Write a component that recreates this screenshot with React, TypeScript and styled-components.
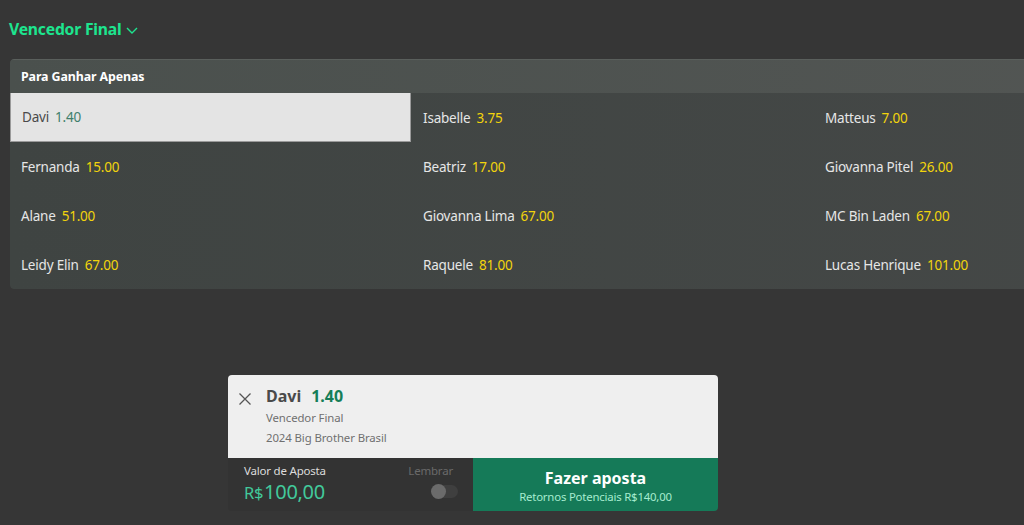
import styled, { createGlobalStyle } from 'styled-components';

const runners = [
    { name: 'Davi', odds: '1.40' },
    { name: 'Isabelle', odds: '3.75' },
    { name: 'Matteus', odds: '7.00' },
    { name: 'Fernanda', odds: '15.00' },
    { name: 'Beatriz', odds: '17.00' },
    { name: 'Giovanna Pitel', odds: '26.00' },
    { name: 'Alane', odds: '51.00' },
    { name: 'Giovanna Lima', odds: '67.00' },
    { name: 'MC Bin Laden', odds: '67.00' },
    { name: 'Leidy Elin', odds: '67.00' },
    { name: 'Raquele', odds: '81.00' },
    { name: 'Lucas Henrique', odds: '101.00' },
];

const GlobalStyle = createGlobalStyle`
    html, body {
        margin: 0;
        padding: 0;
        background: #363636;
        overflow: hidden;
    }
    body {
        font-family: 'Noto Sans', 'Open Sans', sans-serif;
    }
`;

const App = () => {
    return (
        <>
            <GlobalStyle />
            <Page>
                <Title>
                    Vencedor Final
                    <svg width="14" height="14" viewBox="0 0 14 14">
                        <path
                            d="M2 5 L7 10 L12 5"
                            fill="none"
                            stroke="#1de58f"
                            strokeWidth="1.4"
                        />
                    </svg>
                </Title>
                <MarketViewport>
                    <Market>
                        <MarketHeader>Para Ganhar Apenas</MarketHeader>
                        <Grid>
                            {runners.map((r, i) => (
                                <Cell key={i} $selected={i === 0}>
                                    <Name $selected={i === 0}>{r.name}</Name>
                                    <Odds $selected={i === 0}>{r.odds}</Odds>
                                </Cell>
                            ))}
                        </Grid>
                    </Market>
                </MarketViewport>
                <BetSlip>
                    <SlipTop>
                        <CloseButton>
                            <svg width="14" height="14" viewBox="0 0 14 14">
                                <path
                                    d="M1.5 1.5 L12.5 12.5 M12.5 1.5 L1.5 12.5"
                                    stroke="#555"
                                    strokeWidth="1.3"
                                />
                            </svg>
                        </CloseButton>
                        <SlipInfo>
                            <SelectionLine>
                                <SelectionName>Davi</SelectionName>
                                <SelectionOdds>1.40</SelectionOdds>
                            </SelectionLine>
                            <SlipMeta>Vencedor Final</SlipMeta>
                            <SlipMeta>2024 Big Brother Brasil</SlipMeta>
                        </SlipInfo>
                    </SlipTop>
                    <SlipBottom>
                        <StakeArea>
                            <StakeInfo>
                                <StakeLabel>Valor de Aposta</StakeLabel>
                                <StakeValue>
                                    <Currency>R$</Currency>100,00
                                </StakeValue>
                            </StakeInfo>
                            <Remember>
                                <RememberLabel>Lembrar</RememberLabel>
                                <Toggle>
                                    <Knob />
                                </Toggle>
                            </Remember>
                        </StakeArea>
                        <PlaceBet>
                            <PlaceBetTitle>Fazer aposta</PlaceBetTitle>
                            <PlaceBetSub>Retornos Potenciais R$140,00</PlaceBetSub>
                        </PlaceBet>
                    </SlipBottom>
                </BetSlip>
            </Page>
        </>
    );
};

interface SelectedProps {
    $selected: boolean;
}

const Page = styled.div`
    display: flex;
    flex-direction: column;
    width: 1024px;
    height: 525px;
    box-sizing: border-box;
    padding: 18px 0 0 10px;
    overflow: hidden;
`;

const Title = styled.div`
    display: flex;
    align-items: center;
    gap: 3px;
    margin-left: -1px;
    color: #1de58f;
    font-size: 15.7px;
    font-weight: 700;
    height: 22px;
    letter-spacing: -0.2px;

    svg {
        margin-top: 2px;
    }
`;

const MarketViewport = styled.div`
    margin-top: 19px;
    overflow: hidden;
    border-radius: 4px 0 0 4px;
`;

const Market = styled.div`
    width: 1206px;
    border-radius: 4px;
    overflow: hidden;
    background: linear-gradient(90deg, #3f4442 0%, #454847 100%);
`;

const MarketHeader = styled.div`
    height: 34px;
    display: flex;
    align-items: center;
    padding-left: 11px;
    color: #ffffff;
    font-size: 12.4px;
    font-weight: 700;
    letter-spacing: -0.1px;
    background: linear-gradient(90deg, #4a504d 0%, #535654 100%);
    border-top: 1px solid #5a5f5c;
    box-sizing: border-box;
`;

const Grid = styled.div`
    display: grid;
    grid-template-columns: repeat(3, 402px);
    grid-auto-rows: 49px;
`;

const Cell = styled.div<SelectedProps>`
    display: flex;
    align-items: center;
    gap: 6px;
    padding-left: 11px;
    font-size: 13.5px;
    letter-spacing: -0.2px;
    box-sizing: border-box;
    background: ${(p) => (p.$selected ? '#e4e4e4' : 'transparent')};
    border: ${(p) => (p.$selected ? '1px solid #9a9a9a' : 'none')};
    border-top: none;
    margin: ${(p) => (p.$selected ? '0 1px 0 0' : '0')};
`;

const Name = styled.span<SelectedProps>`
    color: ${(p) => (p.$selected ? '#4a4a4a' : '#e6e6e6')};
`;

const Odds = styled.span<SelectedProps>`
    color: ${(p) => (p.$selected ? '#3f7f6c' : '#f2d40c')};
`;

const BetSlip = styled.div`
    margin: 86px 0 0 218px;
    width: 490px;
    border-radius: 4px;
    overflow: hidden;
    display: flex;
    flex-direction: column;
`;

const SlipTop = styled.div`
    background: #efefef;
    height: 83px;
    display: flex;
    padding: 10px 0 0 10px;
    box-sizing: border-box;
`;

const CloseButton = styled.div`
    width: 14px;
    height: 14px;
    margin-top: 4px;
`;

const SlipInfo = styled.div`
    display: flex;
    flex-direction: column;
    margin-left: 14px;
`;

const SelectionLine = styled.div`
    display: flex;
    align-items: baseline;
    gap: 10px;
    font-size: 16px;
    font-weight: 700;
    height: 22px;
`;

const SlipMeta = styled.div`
    color: #707070;
    font-size: 11.4px;
    letter-spacing: -0.1px;
    margin-top: 3px;
    height: 17px;
`;

const SelectionName = styled.span`
    color: #4a4a4a;
`;

const SelectionOdds = styled.span`
    color: #167e58;
`;

const SlipBottom = styled.div`
    display: flex;
    height: 53px;
`;

const StakeArea = styled.div`
    width: 245px;
    background: #333333;
    display: flex;
    justify-content: space-between;
    padding: 5px 15px 0 16px;
    box-sizing: border-box;
`;

const StakeInfo = styled.div`
    display: flex;
    flex-direction: column;
`;

const StakeLabel = styled.div`
    color: #dcdcdc;
    font-size: 11.5px;
    letter-spacing: -0.2px;
`;

const StakeValue = styled.div`
    color: #42c99b;
    font-size: 20px;
    line-height: 28px;
    letter-spacing: -0.3px;
`;

const Currency = styled.span`
    font-size: 16.5px;
    margin-right: 1px;
`;

const Remember = styled.div`
    display: flex;
    flex-direction: column;
    align-items: flex-end;
`;

const RememberLabel = styled.div`
    color: #6a6a6a;
    font-size: 11.5px;
    letter-spacing: -0.2px;
    margin-right: 5px;
`;

const Toggle = styled.div`
    margin-top: 7px;
    width: 26px;
    height: 13px;
    border-radius: 7px;
    background: #3f3f3f;
    position: relative;
`;

const Knob = styled.div`
    position: absolute;
    left: -1px;
    top: -1px;
    width: 15px;
    height: 15px;
    border-radius: 50%;
    background: #6b6b6b;
`;

const PlaceBet = styled.div`
    flex: 1;
    background: #157a58;
    display: flex;
    flex-direction: column;
    align-items: center;
    justify-content: center;
    padding-top: 3px;
`;

const PlaceBetTitle = styled.div`
    color: #ffffff;
    font-size: 16px;
    font-weight: 700;
    line-height: 21px;
`;

const PlaceBetSub = styled.div`
    color: #a6eccf;
    font-size: 11.4px;
    letter-spacing: -0.2px;
`;

export default App;
